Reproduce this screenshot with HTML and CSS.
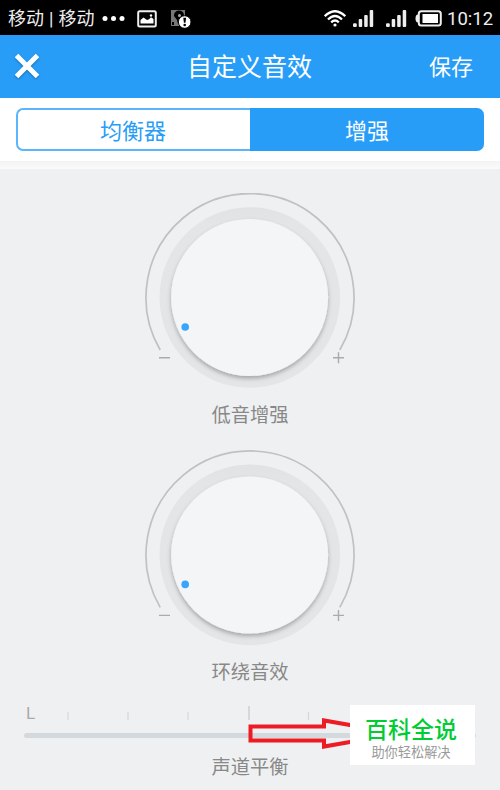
FILE: index.html
```
<!DOCTYPE html>
<html lang="zh-CN">
  <head>
    <meta charset="utf-8">
    <title>自定义音效</title>
    <link rel="stylesheet" href="styles.css">
  </head>
  <body>
    <div class="status-bar">
      <span class="carrier">移动 | 移动</span>
      <svg class="dots" width="24" height="6" viewBox="0 0 24 6" fill="#fff">
        <circle cx="3" cy="2.500" r="2.500" />
        <circle cx="11.500" cy="2.500" r="2.500" />
        <circle cx="20" cy="2.500" r="2.500" />
      </svg>
      <svg class="picture" width="20" height="18" viewBox="0 0 20 18">
        <rect x="1.200" y="1.200" width="17.600" height="15.200" rx="1.500" fill="none" stroke="#eee" stroke-width="2" />
        <path d="M3.500 13.500V10l3-2.500L10 10l2-.8 2-2 2.500 1.800v4.500z" fill="#fff" />
        <circle cx="14" cy="5.500" r="1.200" fill="#fff" />
      </svg>
      <svg class="disk" width="22" height="20" viewBox="0 0 22 20">
        <path d="M1 1h14v10H11v6H1z" fill="#777" />
        <path d="M4 7a4.500 4.500 0 0 1 10-1l-4 4-2 5-1-4z" fill="#000" />
        <circle cx="9.500" cy="6.500" r="1.500" fill="#aaa" />
        <path d="M2 13h2v3H2z" fill="#000" />
        <circle cx="14.700" cy="13" r="6.300" fill="#fff" stroke="#000" />
        <path d="M13.300 8.800h2.800l-.6 5h-1.600z" />
        <circle cx="14.700" cy="16" r="1.300" />
      </svg>
      <svg class="wifi" width="22" height="17" viewBox="0 0 22 17" fill="none" stroke="#fff" stroke-width="2.300">
        <path d="M.8 6.200Q11-3.800 21.200 6.200" />
        <path d="M4 9.500Q11 2.500 18 9.500" />
        <path d="M7.200 12.400Q11 8.600 14.800 12.400" />
        <circle cx="11" cy="15" r="1.600" fill="#fff" stroke="none" />
      </svg>
      <svg class="signal" width="21" height="17" viewBox="0 0 21 17" fill="#eee">
        <rect x="0" y="13.200" width="3.800" height="3.800" rx="1.200" />
        <rect x="5.700" y="9" width="3.500" height="8" rx="1" />
        <rect x="11.200" y="5" width="3.500" height="12" rx="1" />
        <rect x="16.700" y="0" width="3.500" height="17" rx="1" />
      </svg>
      <svg class="signal second" width="21" height="17" viewBox="0 0 21 17" fill="#eee">
        <rect x="0" y="13.200" width="3.800" height="3.800" rx="1.200" />
        <rect x="5.700" y="9" width="3.500" height="8" rx="1" />
        <rect x="11.200" y="5" width="3.500" height="12" rx="1" />
        <rect x="16.700" y="0" width="3.500" height="17" rx="1" />
      </svg>
      <svg class="battery" width="27" height="17" viewBox="0 0 27 17">
        <rect x="3.800" y="1.200" width="22" height="14.400" rx="2.500" fill="none" stroke="#eee" stroke-width="2" />
        <path d="M3 4.500Q.5 4.500.5 8.500T3 12.500z" fill="#eee" />
        <rect x="7.500" y="4" width="15.500" height="9" fill="#fff" />
      </svg>
      <span class="clock">10:12</span>
    </div>

    <div class="header">
      <svg class="close" width="26" height="26" viewBox="0 0 26 26">
        <path d="M2.500 1.500l21 21M23.500 1.500l-21 21" stroke="#fff" stroke-width="5" />
      </svg>
      <span class="title">自定义音效</span>
      <span class="save">保存</span>
    </div>

    <div class="tabs">
      <div class="tab">均衡器</div>
      <div class="tab active">增强</div>
    </div>
    <div class="divider"></div>

    <div class="content">
      <div class="knob">
        <svg class="dial" width="212" height="200" viewBox="0 0 212 200">
          <defs>
            <filter id="shadow" x="-10%" y="-10%" width="120%" height="120%">
              <feDropShadow dx="0" dy="2.500" stdDeviation="2" flood-color="#000" flood-opacity=".28" />
            </filter>
            <linearGradient id="ring" x1="0" y1="0" x2="0" y2="1">
              <stop stop-color="#e0e2e4" offset="0" />
              <stop stop-color="#e3e5e7" offset=".1" />
              <stop stop-color="#e4e5e7" offset="1" />
            </linearGradient>
          </defs>
          <path class="arc" d="M16.200 157A104 104 0 1 1 195.800 157" />
          <circle cx="105.800" cy="104.500" r="90.300" fill="url(#ring)" />
          <circle cx="105.600" cy="104.500" r="78.500" fill="#f4f5f7" filter="url(#shadow)" />
          <circle cx="41.200" cy="134" r="3.800" fill="#38a5fa" />
          <path class="sign" d="M15 164.800h11M189 164.800h11M194.500 159.300v11" />
        </svg>
        <div class="label">低音增强</div>
      </div>
      <div class="knob">
        <svg class="dial" width="212" height="200" viewBox="0 -.4 212 200">
          <path class="arc" d="M16.200 157A104 104 0 1 1 195.800 157" />
          <circle cx="105.800" cy="104.500" r="90.300" fill="url(#ring)" />
          <circle cx="105.600" cy="104.500" r="78.500" fill="#f4f5f7" filter="url(#shadow)" />
          <circle cx="41.200" cy="134" r="3.800" fill="#38a5fa" />
          <path class="sign" d="M15 165h11M189 165h11M194.500 159.500v11" />
        </svg>
        <div class="label">环绕音效</div>
      </div>

      <div class="balance">
        <div class="scale">
          <span class="side">L</span>
          <svg width="430" height="15" viewBox="0 0 430 15">
            <path class="ticks" d="M24 6v8M84 6v8M144 6v8M264.500 6v8M324.500 6v8M384.500 6v8" />
            <path class="ticks mid" d="M205 0v14" />
          </svg>
        </div>
        <div class="track"></div>
        <div class="label">声道平衡</div>
        <svg class="arrow" width="140" height="40" viewBox="0 0 140 40">
          <path d="M3.500 9.500H77V3.500L152 16.500 77 29.500V23.500H3.500z" />
        </svg>
        <div class="stamp">
          <div class="name">百科全说</div>
          <div class="slogan">助你轻松解决</div>
        </div>
      </div>
    </div>
  </body>
</html>
```
FILE: styles.css
```
body {
  margin: 0;
  height: 790px;
  overflow: hidden;
  background: #eff0f2;
  font-family: Roboto, "Noto Sans CJK SC", sans-serif;
}

svg {
  display: block;
  flex: none;
}

.status-bar {
  display: flex;
  align-items: center;
  box-sizing: border-box;
  height: 35px;
  padding: 2px 8px 0 8px;
  background: #000;
  color: #eee;
  white-space: nowrap;
}

.carrier {
  width: 93px;
  font-size: 18px;
  line-height: 32px;
  word-spacing: 0.6px;
}

.dots {
  margin-left: 1px;
}

.picture {
  margin-left: 11px;
}

.disk {
  margin-left: 13px;
}

.wifi {
  margin-left: auto;
}

.signal {
  margin-left: 7px;
}

.signal.second {
  margin-left: 12px;
}

.battery {
  margin-left: 8px;
}

.clock {
  width: 45px;
  margin-left: 5px;
  font-size: 18.5px;
}

.header {
  display: grid;
  grid-template-columns: 100px 1fr 100px;
  align-items: center;
  box-sizing: border-box;
  height: 63px;
  background: #279df8;
  color: #fff;
}

.close {
  margin-left: 14px;
  filter: drop-shadow(0 1px 1px rgba(0, 0, 0, 0.3));
}

.title {
  padding: 0 1px 4px 0;
  font-size: 25px;
  text-align: center;
}

.save {
  padding: 0 0 3px 29px;
  font-size: 22px;
}

.tabs {
  display: flex;
  box-sizing: border-box;
  height: 63px;
  padding: 10px 16px;
  background: #fff;
}

.tab {
  flex: 1;
  box-sizing: border-box;
  height: 43px;
  padding-right: 2px;
  border: 2px solid #5cb5fa;
  border-right: 0;
  border-radius: 7px 0 0 7px;
  color: #279df8;
  font-size: 22px;
  line-height: 43px;
  text-align: center;
}

.tab.active {
  border-color: #279df8;
  border-radius: 0 7px 7px 0;
  background: #279df8;
  color: #fff;
}

.divider {
  height: 8px;
  background: linear-gradient(#f3f3f3, #fbfbfb);
}

.content {
  padding-top: 24px;
}

.knob {
  height: 257px;
}

.dial {
  margin: 0 auto;
}

.arc {
  fill: none;
  stroke: #bfc1c3;
  stroke-width: 1.7;
}

.sign {
  stroke: #aaabac;
  stroke-width: 1.4;
}

.label {
  height: 42px;
  color: #888;
  font-size: 19.3px;
  line-height: 46px;
  text-align: center;
}

.balance {
  position: relative;
  padding: 0 24px;
}

.scale {
  display: flex;
  height: 28px;
  align-items: flex-start;
  margin-top: -2px;
}

.side {
  width: 18px;
  padding-left: 2px;
  color: #aaa;
  font-size: 17px;
  line-height: 16px;
}

.scale svg {
  margin-top: 1px;
}

.ticks {
  stroke: #d5d8db;
  stroke-width: 1.2;
}

.ticks.mid {
  stroke-width: 2;
}

.track {
  height: 5px;
  border-radius: 3px;
  background: #d3d9dc;
}

.balance .label {
  height: 50px;
  line-height: 60px;
}

.arrow {
  position: absolute;
  left: 247px;
  top: 12px;
  fill: none;
  stroke: #ed1c24;
  stroke-width: 4;
}

/* sits over the right end of the slider */
.stamp {
  position: absolute;
  left: 350px;
  top: 0;
  width: 125px;
  height: 60px;
  background: #fff;
  text-align: center;
}

.name {
  margin: 9px 3px 0 0;
  color: #0c3;
  font-size: 23px;
  font-weight: 500;
  line-height: 34px;
}

.slogan {
  padding-right: 3px;
  color: #999;
  font-size: 13.2px;
  line-height: 10px;
}
```
